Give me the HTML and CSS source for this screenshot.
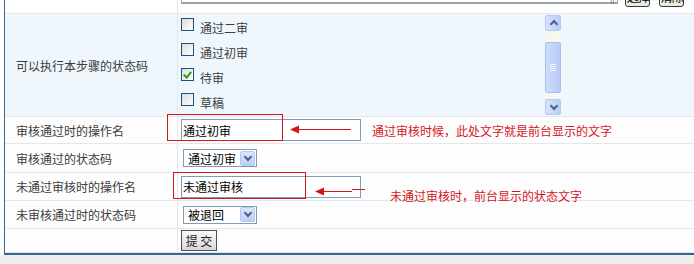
FILE: index.html
```html
<!DOCTYPE html>
<html lang="zh-CN">
<head>
  <meta charset="UTF-8" />
  <title>流程步骤设置</title>
  <link rel="stylesheet" href="styles.css">
</head>
<body>

  <div class="page">
    <div class="panel">

      <!-- top row, mostly scrolled out of view -->
      <div class="row row-top">
        <div class="label"></div>
        <div class="value">
          <input class="text-input wide" type="text" value="">
          <span class="grip">||</span>
          <button class="small-button">选择</button>
          <button class="small-button">清除</button>
        </div>
      </div>

      <div class="row row-status">
        <div class="label">可以执行本步骤的状态码</div>
        <div class="value">
          <div class="check-list">
            <label class="check"><input type="checkbox"> 通过二审</label>
            <label class="check"><input type="checkbox"> 通过初审</label>
            <label class="check"><input type="checkbox" checked> 待审</label>
            <label class="check"><input type="checkbox"> 草稿</label>
          </div>
          <div class="scrollbar">
            <span class="scroll-btn up"></span>
            <span class="scroll-track"><span class="scroll-thumb"><i></i><i></i><i></i><i></i></span></span>
            <span class="scroll-btn down"></span>
          </div>
        </div>
      </div>

      <div class="row row-a">
        <div class="label">审核通过时的操作名</div>
        <div class="value">
          <input class="text-input" type="text" value="通过初审">
        </div>
      </div>

      <div class="row row-b">
        <div class="label">审核通过的状态码</div>
        <div class="value">
          <div class="select-box">
            <span class="select-text">通过初审</span>
            <span class="select-arrow"></span>
          </div>
        </div>
      </div>

      <div class="row row-c">
        <div class="label">未通过审核时的操作名</div>
        <div class="value">
          <input class="text-input" type="text" value="未通过审核">
        </div>
      </div>

      <div class="row row-d">
        <div class="label">未审核通过时的状态码</div>
        <div class="value">
          <div class="select-box">
            <span class="select-text">被退回</span>
            <span class="select-arrow"></span>
          </div>
        </div>
      </div>

      <div class="row row-submit">
        <div class="label"></div>
        <div class="value">
          <button class="submit-button">提 交</button>
        </div>
      </div>

    </div>

    <!-- red notes drawn over the form -->
    <div class="notes">
      <svg width="694" height="264" viewBox="0 0 694 264">
        <rect x="167.5" y="114.5" width="115" height="26" fill="none" stroke="#d4161c" />
        <rect x="173.5" y="172.5" width="132" height="26" fill="none" stroke="#d4161c" />
        <line x1="296" y1="129.5" x2="351" y2="129.5" stroke="#d4161c" />
        <polygon points="290,129.5 299,125.5 299,133.5" fill="#e01010" />
        <line x1="322" y1="191.5" x2="352" y2="191.5" stroke="#d4161c" />
        <line x1="352" y1="189.5" x2="365" y2="189.5" stroke="#d4161c" />
        <polygon points="315,191.5 324,187.5 324,195.5" fill="#e01010" />
      </svg>
      <span class="note note-1">通过审核时候，此处文字就是前台显示的文字</span>
      <span class="note note-2">未通过审核时，前台显示的状态文字</span>
    </div>
  </div>

</body>
</html>
```

FILE: styles.css
```css
:root {
  --frame: #37659a;
  --line: #e4e8ec;
  --text: #3c3c3c;
  --field: #7f9db9;
  --note: #d4161c;
}

* {
  box-sizing: border-box;
}

body {
  margin: 0;
  width: 694px;
  height: 264px;
  overflow: hidden;
  background-color: #efefef;
  font-family: "Noto Sans CJK SC", "Noto Sans", sans-serif;
  font-size: 12px;
  color: var(--text);
}

.page {
  position: relative;
  background-color: #fff;
  padding-left: 4px;
}

.panel {
  border-left: 1px solid var(--frame);
  border-bottom: 2px solid var(--frame);
  background-color: #fdfdfd;
}

.row {
  display: grid;
  grid-template-columns: 173px 1fr;
  grid-template-rows: minmax(0, 1fr);
  border-bottom: 1px solid var(--line);
  overflow: hidden;
}

.label {
  display: flex;
  align-items: center;
  padding-left: 11px;
  border-right: 1px solid var(--line);
  white-space: nowrap;
}

.value {
  display: flex;
  align-items: center;
  padding-left: 3px;
  min-height: 0;
}

.row-top {
  height: 14px;
  background-color: #fff;
}

.row-top .value {
  align-items: flex-end;
}

.row-status {
  height: 103px;
  background-color: #f0f7fc;
}

.row-a { height: 27px; }
.row-b { height: 29px; }
.row-c { height: 28px; }
.row-d { height: 28px; }
.row-submit { height: 24px; }

/* inputs */

.text-input {
  width: 180px;
  height: 22px;
  border: 1px solid var(--field);
  padding: 0 1px;
  font-family: inherit;
  font-size: 12px;
  color: #000;
  background-color: #fff;
  outline: none;
  flex-shrink: 0;
}

.text-input.wide {
  width: 437px;
  margin-bottom: 9px;
  border-color: #a5acb2;
  border-bottom-width: 2px;
  border-bottom-color: #9ea3a8;
}

.grip {
  margin: 0 0 10px -8px;
  font-size: 8px;
  line-height: 8px;
  color: #555;
}

.small-button {
  flex-shrink: 0;
  height: 20px;
  width: 25px;
  margin: 0 0 6px 11px;
  padding: 0;
  border: 1px solid #1c3d5f;
  border-radius: 3px;
  background: linear-gradient(#fff, #ece9d8);
  font-family: inherit;
  font-size: 12px;
  line-height: 18px;
  letter-spacing: -1px;
  white-space: nowrap;
  color: #000;
  overflow: hidden;
}

.small-button + .small-button {
  margin-left: 9px;
}

/* checkbox list */

.row-status .value {
  align-items: flex-start;
}

.check-list {
  width: 364px;
  display: flex;
  flex-direction: column;
}

.check {
  display: flex;
  align-items: center;
  height: 25px;
  gap: 6px;
  padding-top: 1px;
  color: var(--text);
}

.check input {
  appearance: none;
  width: 13px;
  height: 13px;
  margin: 0 0 5px 0;
  border: 1px solid #1c5180;
  background: linear-gradient(135deg, #dcdcd7, #fff);
  position: relative;
}

.check input:checked::after {
  content: "";
  position: absolute;
  left: 3px;
  top: 1px;
  width: 3px;
  height: 6px;
  border-right: 2px solid #21a121;
  border-bottom: 2px solid #21a121;
  transform: rotate(40deg);
}

.scrollbar {
  width: 16px;
  height: 100px;
  margin-top: 1px;
  display: flex;
  flex-direction: column;
  background-color: #f7f6ef;
}

.scroll-btn {
  height: 16px;
  border: 1px solid #b6c9f3;
  border-radius: 2px;
  background: linear-gradient(90deg, #d6e2fd, #b9cdf8);
  position: relative;
}

.scroll-btn::after {
  content: "";
  position: absolute;
  left: 5px;
  width: 4px;
  height: 4px;
  border-left: 2px solid #4d6185;
  border-top: 2px solid #4d6185;
}

.scroll-btn.up::after {
  top: 5px;
  transform: rotate(45deg);
}

.scroll-btn.down::after {
  top: 3px;
  transform: rotate(225deg);
}

.scroll-track {
  flex: 1;
  padding: 11px 0 6px;
  display: flex;
}

.scroll-thumb {
  flex: 1;
  border: 1px solid #a9bff2;
  border-radius: 2px;
  background: linear-gradient(90deg, #cfdcfb, #b8cbf7);
  display: flex;
  flex-direction: column;
  justify-content: center;
  align-items: center;
  gap: 1px;
}

.scroll-thumb i {
  width: 6px;
  height: 1px;
  background-color: #eef3ff;
}

/* selects */

.select-box {
  width: 74px;
  height: 18px;
  margin-left: 2px;
  display: flex;
  align-items: center;
  justify-content: space-between;
  border: 1px solid var(--field);
  background-color: #fff;
  padding: 0 1px 0 4px;
  color: #000;
}

.select-arrow {
  width: 15px;
  height: 15px;
  border: 1px solid #b6c9f3;
  border-radius: 2px;
  background: linear-gradient(#dce6fd, #bccff8);
  position: relative;
}

.select-arrow::after {
  content: "";
  position: absolute;
  left: 4px;
  top: 2px;
  width: 4px;
  height: 4px;
  border-right: 2px solid #4d6185;
  border-bottom: 2px solid #4d6185;
  transform: rotate(45deg);
}

/* submit */

.row-submit .value {
  align-items: flex-start;
  padding-top: 1px;
}

.submit-button {
  width: 36px;
  height: 21px;
  padding: 0;
  border: 1px solid #505050;
  background: linear-gradient(#fafafa, #d8d8d8);
  font-family: inherit;
  font-size: 12px;
  color: #222;
}

/* red notes */

.notes {
  position: absolute;
  top: 0;
  left: 0;
  width: 694px;
  height: 264px;
  pointer-events: none;
}

.notes svg {
  display: block;
}

.note {
  position: absolute;
  color: var(--note);
  font-size: 12px;
  line-height: 14px;
  white-space: nowrap;
}

.note-1 {
  left: 372px;
  top: 124px;
}

.note-2 {
  left: 390px;
  top: 189px;
}
```
